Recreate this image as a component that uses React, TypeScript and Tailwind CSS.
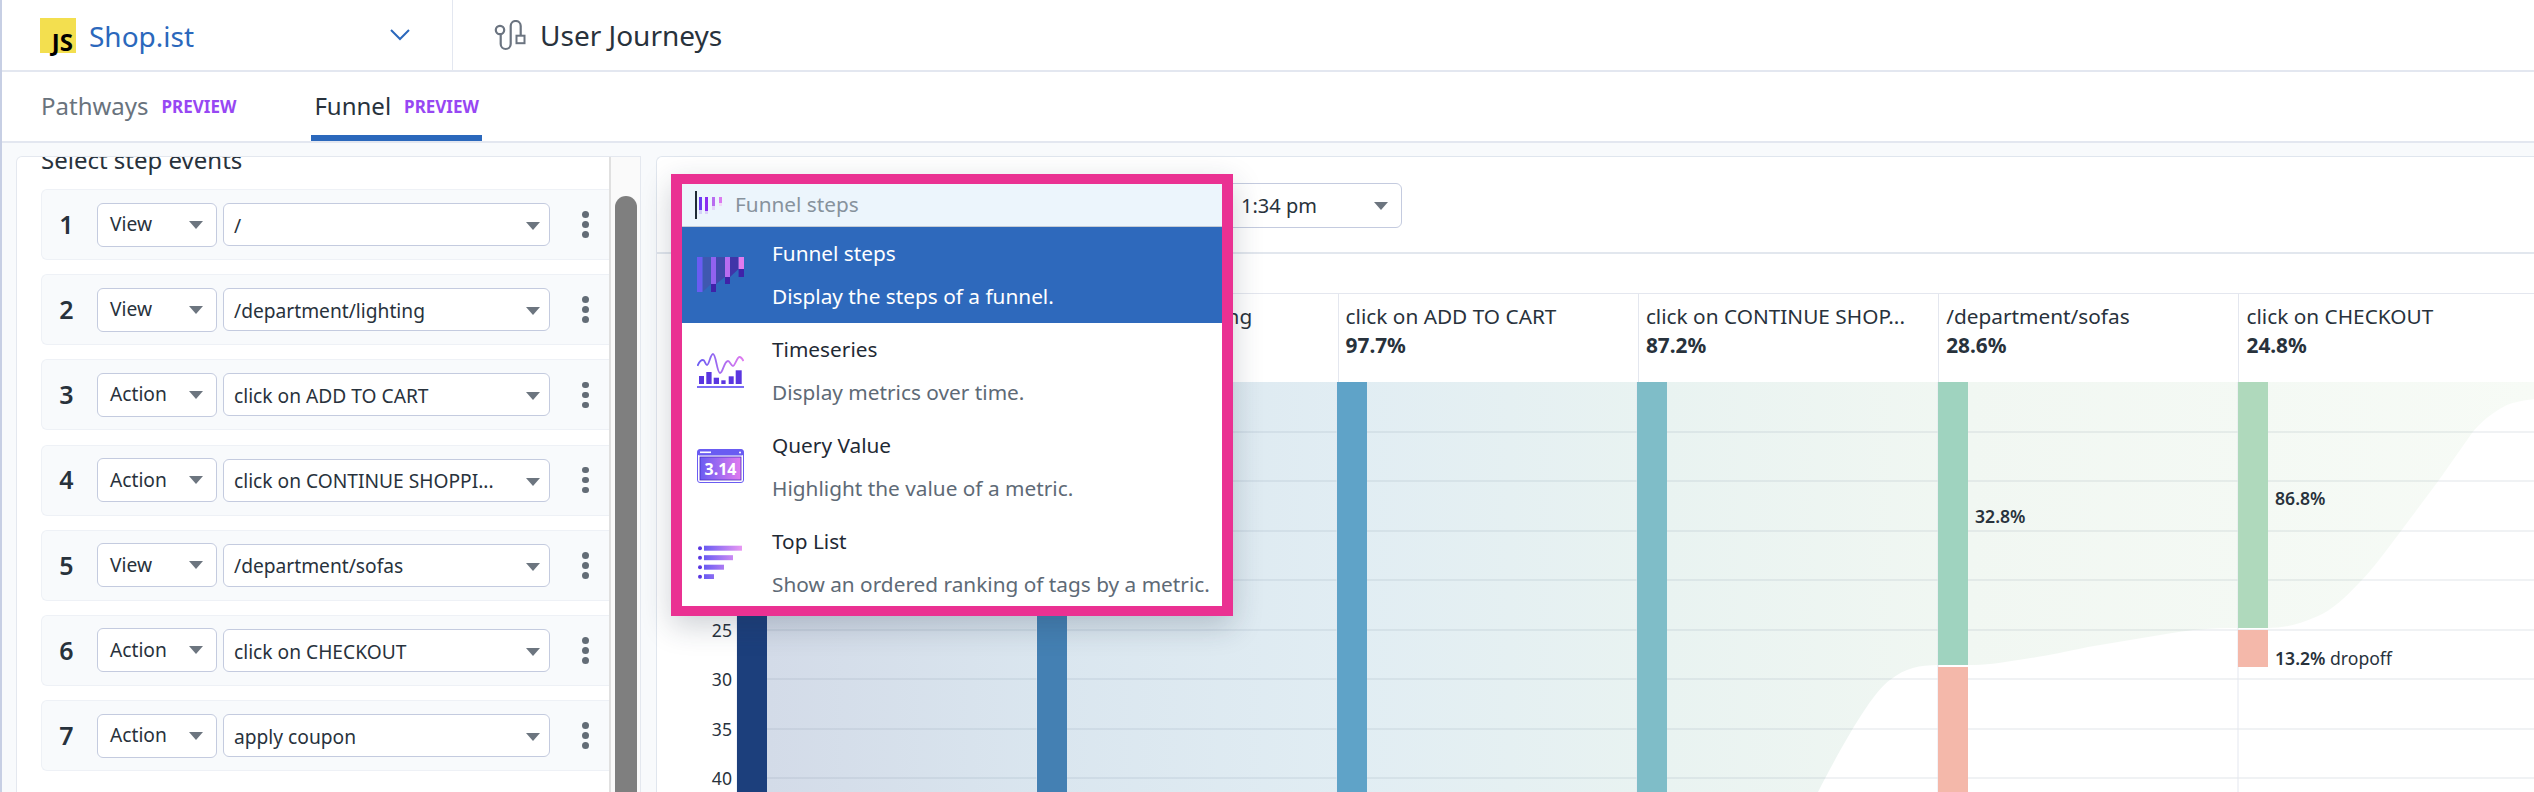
const steps = [
  { kind: 'View', value: '/' },
  { kind: 'View', value: '/department/lighting' },
  { kind: 'Action', value: 'click on ADD TO CART' },
  { kind: 'Action', value: 'click on CONTINUE SHOPPI...' },
  { kind: 'View', value: '/department/sofas' },
  { kind: 'Action', value: 'click on CHECKOUT' },
  { kind: 'Action', value: 'apply coupon' },
];

const columns = [
  { label: '/', pct: '100%' },
  { label: '/department/lighting', pct: '98.4%' },
  { label: 'click on ADD TO CART', pct: '97.7%' },
  { label: 'click on CONTINUE SHOP...', pct: '87.2%' },
  { label: '/department/sofas', pct: '28.6%' },
  { label: 'click on CHECKOUT', pct: '24.8%' },
];

const gridLines = [432, 481, 531, 580, 630, 679, 729, 778];
const barX = [737, 1037, 1337, 1637, 1938, 2238];

function Caret({ className = '' }: { className?: string }) {
  return (
    <svg width="14" height="8" viewBox="0 0 14 8" className={className}>
      <path d="M0 0h14L7 8z" fill="#6c757f" />
    </svg>
  );
}

function Step({ index, kind, value }: { index: number; kind: string; value: string }) {
  return (
    <div className="flex h-[71px] shrink-0 items-center rounded-l-md border border-r-0 border-[#eef1f6] bg-[#f8fafc]">
      <div className="w-[50px] pr-[1px] text-center text-[25px] font-semibold text-[#28323c]">{index}</div>
      <div className="ml-[5px] flex h-[44px] w-[120px] items-center justify-between rounded-md border border-[#c4cbdf] bg-white pl-[12px] pr-[13px] text-[19.2px]">
        {kind}
        <Caret />
      </div>
      <div className="ml-[6px] flex h-[43px] w-[327px] items-center justify-between rounded-md border border-[#c4cbdf] bg-white pl-[10px] pr-[9px] pt-[3px] text-[19.2px]">
        {value}
        <Caret />
      </div>
      <div className="ml-[32px] flex w-[6px] flex-col gap-[3.5px]">
        <span className="h-[6.5px] w-[6.5px] rounded-full bg-[#636c76]" />
        <span className="h-[6.5px] w-[6.5px] rounded-full bg-[#636c76]" />
        <span className="h-[6.5px] w-[6.5px] rounded-full bg-[#636c76]" />
      </div>
    </div>
  );
}

function FunnelIcon() {
  return (
    <svg width="47" height="35" viewBox="0 0 47 35">
      <path d="M5.5 0H14V27L5.5 35z" fill="#3f58b0" />
      <path d="M19 0H28V20L19 27z" fill="#4149ab" />
      <path d="M33 0H41.6V12L33 20z" fill="#3f35a8" />
      <rect x="0" width="5.5" height="35" fill="#6a5cf2" />
      <rect x="14" width="5" height="27" fill="#9162ef" />
      <rect x="14" y="27" width="5" height="8" fill="#3f22a8" />
      <rect x="28" width="5" height="20" fill="#b96cf0" />
      <rect x="28" y="20" width="5" height="7" fill="#3f22a8" />
      <rect x="41.6" width="5.4" height="12" fill="#e07bef" />
      <rect x="41.6" y="12" width="5.4" height="8" fill="#3f22a8" />
    </svg>
  );
}

function SearchFunnelIcon() {
  return (
    <svg width="23" height="17" viewBox="0 0 23 17">
      <rect x="0" width="3" height="17" fill="#d5d0fa" />
      <rect x="0" width="3" height="13" fill="#6a3cf2" />
      <rect x="6" width="3" height="17" fill="#dcd0fa" />
      <rect x="6" width="3" height="14" fill="#8a2cf0" />
      <rect x="13" width="3" height="13" fill="#e4d4fb" />
      <rect x="13" width="3" height="9" fill="#b86cf0" />
      <rect x="20" width="3" height="9" fill="#f1d8f8" />
      <rect x="20" width="3" height="6" fill="#dc7aef" />
    </svg>
  );
}

function TimeseriesIcon() {
  return (
    <svg width="47" height="35" viewBox="0 0 47 35">
      <defs>
        <linearGradient id="ts-line" x1="0" x2="1" y1="0" y2="0">
          <stop offset="0" stopColor="#6a5cf2" />
          <stop offset="1" stopColor="#e07bef" />
        </linearGradient>
      </defs>
      <path
        d="M0.5 13C2 9 4 7 6 7C8 7 8.500 12 10 12C12 12 13.500 1 16 1C19 1 20 20 23 20C26 20 27 8 31 8C33 8 34 13 36 13C38 13 40 4 42.600 4C44 4 45.500 6 46.500 8"
        fill="none"
        stroke="url(#ts-line)"
        strokeWidth="1.8"
      />
      <g fill="#5a36e0">
        <rect x="2" y="23" width="5" height="8" />
        <rect x="9.300" y="19" width="5.300" height="12" />
        <rect x="16.700" y="24.700" width="5.300" height="6.300" />
        <rect x="24.300" y="27.300" width="4.300" height="3.700" />
        <rect x="31.700" y="23.300" width="5" height="7.700" />
        <rect x="38.700" y="17.300" width="6" height="13.700" />
      </g>
      <rect y="33" width="47" height="2.200" fill="#7b6cf5" />
    </svg>
  );
}

function QueryValueIcon() {
  return (
    <svg width="47" height="34" viewBox="0 0 47 34">
      <defs>
        <linearGradient id="qv-fill" x1="0" x2="1" y1="0" y2="0">
          <stop offset="0" stopColor="#6a5cf2" />
          <stop offset="1" stopColor="#e07bef" />
        </linearGradient>
      </defs>
      <rect x="0.500" y="0.500" width="46" height="33" rx="2.500" fill="#fff" stroke="#6a5cf2" />
      <rect x="0.500" y="0.500" width="46" height="6" rx="2" fill="#6a5cf2" />
      <rect x="3" y="2.500" width="11" height="1.600" fill="#fff" />
      <circle cx="43" cy="3.500" r="1" fill="#fff" />
      <rect x="3" y="8" width="41" height="23" fill="url(#qv-fill)" stroke="#4a2cc0" strokeWidth="0.800" />
      <text x="23.500" y="25.500" textAnchor="middle" fontSize="16" fontWeight="700" fill="#fff">
        3.14
      </text>
    </svg>
  );
}

function TopListIcon() {
  const widths = [38, 29, 20, 10];
  return (
    <svg width="47" height="34" viewBox="0 0 47 34">
      <defs>
        <linearGradient id="tl-fill" gradientUnits="userSpaceOnUse" x1="7" x2="45" y1="0" y2="0">
          <stop offset="0" stopColor="#6a5cf2" />
          <stop offset="1" stopColor="#e998f3" />
        </linearGradient>
      </defs>
      {widths.map((w, i) => (
        <g key={w}>
          <circle cx="3" cy={3.2 + i * 9.5} r="2" fill="#5a36e0" />
          <rect x="7" y={0.7 + i * 9.5} width={w} height="5" fill="url(#tl-fill)" />
        </g>
      ))}
    </svg>
  );
}

function PopupItem({
  icon,
  title,
  text,
  active,
  height,
}: {
  icon: React.ReactNode;
  title: string;
  text: string;
  active?: boolean;
  height: string;
}) {
  return (
    <div className={`flex items-start ${height} ${active ? 'bg-[#2e69bc] text-white' : 'bg-white'}`}>
      <div className="ml-[15px] mt-[30px] w-[75px]">{icon}</div>
      <div className="text-[20.800px] leading-[42.500px]">
        <div className={`${active ? 'text-white' : 'text-[#1f2a35]'} mt-[5px]`}>{title}</div>
        <div className={active ? 'text-white' : 'text-[#5e6a76]'}>{text}</div>
      </div>
    </div>
  );
}

function Popup() {
  return (
    <div className="absolute left-[669px] top-[174px] z-10 w-[562px] border-x-[11px] border-y-[10px] border-[#ea3192] shadow-[0_10px_28px_rgba(30,45,70,0.22)]">
      <div className="flex h-[43px] items-center border-b border-[#c5ccd6] bg-[#ecf5fc]">
        <span className="ml-[13px] h-[28px] w-[2px] bg-[#1f2a35]" />
        <span className="ml-[2px] flex">
          <SearchFunnelIcon />
        </span>
        <span className="ml-[13px] text-[20.800px] text-[#87929c]">Funnel steps</span>
      </div>
      <PopupItem active height="h-[96px]" icon={<FunnelIcon />} title="Funnel steps" text="Display the steps of a funnel." />
      <PopupItem height="h-[96px]" icon={<TimeseriesIcon />} title="Timeseries" text="Display metrics over time." />
      <PopupItem height="h-[96px]" icon={<QueryValueIcon />} title="Query Value" text="Highlight the value of a metric." />
      <PopupItem height="h-[91px]" icon={<TopListIcon />} title="Top List" text="Show an ordered ranking of tags by a metric." />
    </div>
  );
}

function FunnelChart() {
  const flow =
    'M767 382H2534V399C2520 401 2510 403 2505 406C2490 414 2480 423 2472 433L2439 480L2401 531C2385 552 2372 570 2360 582C2345 598 2332 610 2318 616C2300 624 2285 628 2268 628H2238C2210 628 2190 630 2172 633L2088 647C2060 653 2040 657 2018 660C2000 663 1985 665 1968 665H1938C1920 665 1905 668 1890 680C1875 690 1850 730 1818 792H767z';
  return (
    <svg width="1877" height="410" viewBox="657 382 1877 410" className="block">
      <defs>
        <linearGradient id="flow-fill" gradientUnits="userSpaceOnUse" x1="767" x2="2534" y1="0" y2="0">
          <stop offset="0" stopColor="#d3dbe8" />
          <stop offset="0.16" stopColor="#dae6ef" />
          <stop offset="0.33" stopColor="#e1edf3" />
          <stop offset="0.51" stopColor="#e9f3f1" />
          <stop offset="0.68" stopColor="#f1f7f2" />
          <stop offset="1" stopColor="#f7fbf6" />
        </linearGradient>
      </defs>
      <path d={flow} fill="url(#flow-fill)" />
      {gridLines.map((y, i) => (
        <g key={y}>
          <line x1="737" x2="2534" y1={y} y2={y} stroke="#3c506e" strokeOpacity="0.15" strokeWidth="1.200" />
          <text x="732" y={y + 7} textAnchor="end" fontSize="17.600" fill="#28323c">
            {(i + 1) * 5}
          </text>
        </g>
      ))}
      {barX.map(x => (
        <line key={x} x1={x} x2={x} y1="382" y2="792" stroke="#e4e7ef" />
      ))}
      <rect x={barX[0]} y="382" width="30" height="410" fill="#1c3f7c" />
      <rect x={barX[1]} y="382" width="30" height="410" fill="#4480b3" />
      <rect x={barX[2]} y="382" width="30" height="410" fill="#5fa3c8" />
      <rect x={barX[3]} y="382" width="30" height="410" fill="#7fbdc8" />
      <rect x={barX[4]} y="382" width="30" height="283" fill="#9fd3bf" />
      <rect x={barX[4]} y="667" width="30" height="125" fill="#f4b8aa" />
      <rect x={barX[5]} y="382" width="30" height="246" fill="#afd9bc" />
      <rect x={barX[5]} y="630" width="30" height="37" fill="#f4b8aa" />
      <text x="1975" y="523" fontSize="17.600" fontWeight="600" fill="#28323c">
        32.8%
      </text>
      <text x="2275" y="505" fontSize="17.600" fontWeight="600" fill="#28323c">
        86.8%
      </text>
      <text x="2275" y="665" fontSize="17.600" fill="#28323c">
        <tspan fontWeight="600">13.2%</tspan> dropoff
      </text>
    </svg>
  );
}

export default function App() {
  return (
    <div className="relative flex h-[792px] w-[2534px] flex-col overflow-hidden border-l-2 border-[#c7cfe4] bg-[#f8fafc] font-['Noto_Sans',sans-serif] text-[#28323c]">
      <span className="absolute left-[-2px] top-[390px] h-[68px] w-[2px] bg-[#5a2ca0]" />

      <header className="flex h-[72px] shrink-0 items-center border-b-2 border-[#e3e7f0] bg-white">
        <div className="flex h-full w-[451px] items-center border-r border-[#e3e7f0] pl-[38px] pr-[42px]">
          <div className="flex h-[35px] w-[36px] items-end justify-end bg-[#f3df4f] pb-[1px] pr-[3px] text-[24px] font-bold leading-[20px] text-black">
            JS
          </div>
          <span className="ml-[13px] mt-[2px] flex-1 text-[28px] text-[#2b68bc]">Shop.ist</span>
          <svg width="20" height="12" viewBox="0 0 20 12" fill="none" stroke="#2b68bc" strokeWidth="2">
            <path d="M1 1l9 9 9-9" />
          </svg>
        </div>
        <svg className="ml-[41px]" width="32" height="31" viewBox="0 0 32 31" fill="none" stroke="#6b7480" strokeWidth="2.200">
          <circle cx="6" cy="10" r="4.200" />
          <path d="M6.700 14.500V24a5 5 0 0 0 10 0V6a5 5 0 0 1 10 0v9.700" />
          <rect x="22.500" y="15.700" width="8" height="7.500" strokeWidth="2" />
        </svg>
        <span className="ml-[14px] text-[28px]">User Journeys</span>
      </header>

      <nav className="flex h-[71px] shrink-0 border-b-2 border-[#e3e7f0] bg-white pl-[39px]">
        <div className="flex items-center pb-[2px]">
          <span className="text-[24px] text-[#69737d]">Pathways</span>
          <span className="ml-[13px] mt-[2px] text-[17px] font-bold text-[#9747f3]">PREVIEW</span>
        </div>
        <div className="ml-[75px] flex items-center border-b-[6px] border-[#2b68bc] px-[3px] pt-[4px]">
          <span className="text-[24px]">Funnel</span>
          <span className="ml-[13px] mt-[2px] text-[17px] font-bold text-[#9747f3]">PREVIEW</span>
        </div>
      </nav>

      <main className="flex min-h-0 flex-1 pl-[14px] pt-[13px]">
        <section className="flex w-[625px] shrink-0 overflow-hidden rounded-tl-md border-l border-r border-t border-[#e4e8ef] bg-white">
          <div className="flex w-[592px] flex-col overflow-hidden pl-[24px]">
            <div className="h-[32px] shrink-0 overflow-hidden">
              <div className="mt-[-14px] text-[24px] leading-[34px]">Select step events</div>
            </div>
            <div className="flex flex-col gap-[14.200px]">
              {steps.map((step, i) => (
                <Step key={i} index={i + 1} kind={step.kind} value={step.value} />
              ))}
            </div>
          </div>
          <div className="w-[31px] shrink-0 border-l-2 border-[#e0e0e0] bg-[#fafafa] pl-[4px] pt-[39px]">
            <div className="h-full w-[22px] rounded-t-full bg-[#7f7f7f]" />
          </div>
        </section>

        <section className="ml-[15px] flex min-w-0 flex-1 flex-col rounded-tl-md border-l border-t border-[#e0e6ee] bg-white">
          <div className="flex h-[97px] shrink-0 items-start justify-end border-b-2 border-[#e2e7ee] pr-[1132px] pt-[26px]">
            <div className="flex h-[45px] w-[500px] items-center justify-between rounded-md border border-[#c4cbdf] pl-[338px] pr-[13px] text-[20px]">
              1:34 pm
              <Caret />
            </div>
          </div>
          <div className="ml-[80px] mt-[39px] flex h-[89px] shrink-0 border-t border-[#e4e7ef]">
            {columns.map(col => (
              <div key={col.label} className="w-[300.300px] shrink-0 border-l border-[#e4e7ef] pl-[7px] pt-[8px] text-[20.800px] leading-[29px]">
                <div>{col.label}</div>
                <div className="font-bold">{col.pct}</div>
              </div>
            ))}
          </div>
          <FunnelChart />
        </section>
      </main>

      <Popup />
    </div>
  );
}
